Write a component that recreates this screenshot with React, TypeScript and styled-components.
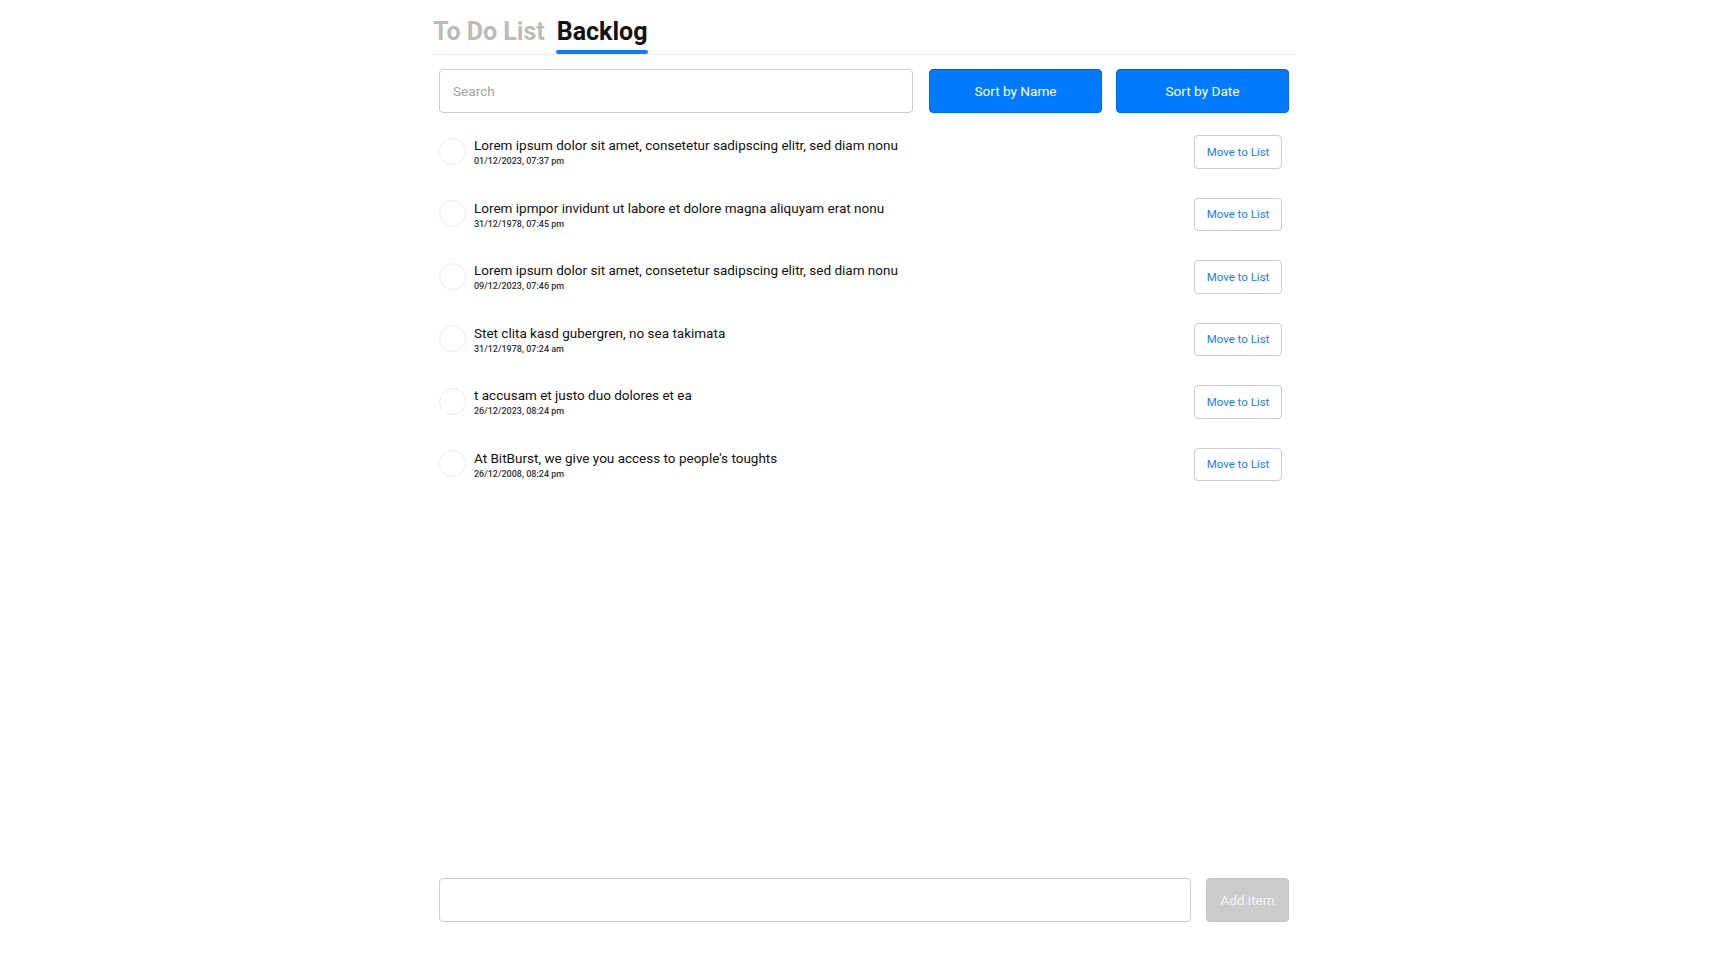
import React, { useState } from "react";
import styled, { createGlobalStyle } from "styled-components";

const GlobalStyle = createGlobalStyle`
  html, body { margin: 0; padding: 0; background: #fff; }
  body { font-family: Roboto, "Liberation Sans", Arial, sans-serif; color: #111; }
  * { box-sizing: border-box; }
`;

const Page = styled.div`
  width: 864px;
  height: 100vh;
  margin: 0 auto;
  display: flex;
  flex-direction: column;
`;

const Tabs = styled.nav`
  display: flex;
  gap: 12px;
  padding: 17px 0 0 1px;
  border-bottom: 1px solid #ebebeb;
`;

const Tab = styled.button<{ $active?: boolean }>`
  position: relative;
  border: none;
  background: none;
  padding: 0 0 7px;
  margin: 0;
  font-family: Roboto, "Liberation Sans", Arial, sans-serif;
  font-size: 25px;
  line-height: 30px;
  font-weight: 700;
  color: ${(p) => (p.$active ? "#111" : "#bbbbbb")};
  cursor: pointer;
  &::after {
    content: "";
    position: absolute;
    left: -1px;
    right: -1px;
    bottom: 0;
    height: 4px;
    border-radius: 2px;
    background: ${(p) => (p.$active ? "#0a7cff" : "transparent")};
  }
`;

const Toolbar = styled.div`
  display: flex;
  align-items: stretch;
  gap: 14px;
  margin-top: 14px;
  padding: 0 7px;
  height: 44px;
`;

const TextField = styled.input`
  flex: 1;
  height: 44px;
  border: 1px solid #cccccc;
  border-radius: 4px;
  padding: 0 13px;
  font-family: Roboto, "Liberation Sans", Arial, sans-serif;
  font-size: 13.6px;
  color: #222;
  outline: none;
  &::placeholder { color: #a3a3a3; }
`;

const SearchField = styled(TextField)`
  flex: 0 0 474px;
  margin-right: 2px;
`;

const SortButton = styled.button`
  flex: 0 0 173px;
  border: 1px solid #0068d6;
  border-radius: 4px;
  background: #007bff;
  color: #fff;
  font-family: Roboto, "Liberation Sans", Arial, sans-serif;
  font-size: 13.6px;
  cursor: pointer;
`;

const List = styled.ul`
  list-style: none;
  margin: 7.5px 0 0;
  padding: 0;
  flex: 1;
`;

const Row = styled.li`
  display: flex;
  align-items: center;
  height: 62.5px;
  padding: 0 14px 0 7px;
`;

const Check = styled.span`
  flex: 0 0 27px;
  height: 27px;
  border-radius: 50%;
  border: 1px solid #ececec;
  margin-right: 8px;
  margin-top: -1px;
`;

const Body = styled.div`
  flex: 1;
  display: flex;
  flex-direction: column;
  margin-top: 1px;
`;

const Title = styled.span`
  font-size: 13.5px;
  line-height: 16px;
  color: #111;
`;

const DateText = styled.span`
  font-size: 9px;
  line-height: 11px;
  font-weight: 500;
  color: #333;
  margin-top: 3px;
`;

const MoveButton = styled.button`
  height: 33.5px;
  width: 88px;
  border: 1px solid #cccccc;
  border-radius: 4px;
  background: #fff;
  color: #1a7cff;
  font-family: Roboto, "Liberation Sans", Arial, sans-serif;
  font-size: 11.5px;
  padding: 0;
  cursor: pointer;
`;

const AddForm = styled.form`
  display: flex;
  gap: 15px;
  padding: 0 7px 50px;
  height: 94px;
`;

const AddButton = styled.button`
  flex: 0 0 83px;
  border: 1px solid #c4c4c4;
  border-radius: 4px;
  background: #cccccc;
  color: #f4f4f4;
  font-family: Roboto, "Liberation Sans", Arial, sans-serif;
  font-size: 13.6px;
  padding: 0;
`;

const items = [
  { title: "Lorem ipsum dolor sit amet, consetetur sadipscing elitr, sed diam nonu", date: "01/12/2023, 07:37 pm" },
  { title: "Lorem ipmpor invidunt ut labore et dolore magna aliquyam erat nonu", date: "31/12/1978, 07:45 pm" },
  { title: "Lorem ipsum dolor sit amet, consetetur sadipscing elitr, sed diam nonu", date: "09/12/2023, 07:46 pm" },
  { title: "Stet clita kasd gubergren, no sea takimata", date: "31/12/1978, 07:24 am" },
  { title: "t accusam et justo duo dolores et ea", date: "26/12/2023, 08:24 pm" },
  { title: "At BitBurst, we give you access to people's toughts", date: "26/12/2008, 08:24 pm" },
];

export default function App() {
  const [text, setText] = useState("");
  return (
    <>
      <GlobalStyle />
      <Page>
        <Tabs>
          <Tab>To Do List</Tab>
          <Tab $active>Backlog</Tab>
        </Tabs>
        <Toolbar>
          <SearchField placeholder="Search" />
          <SortButton>Sort by Name</SortButton>
          <SortButton>Sort by Date</SortButton>
        </Toolbar>
        <List>
          {items.map((it, i) => (
            <Row key={i}>
              <Check />
              <Body>
                <Title>{it.title}</Title>
                <DateText>{it.date}</DateText>
              </Body>
              <MoveButton>Move to List</MoveButton>
            </Row>
          ))}
        </List>
        <AddForm onSubmit={(e) => e.preventDefault()}>
          <TextField value={text} onChange={(e) => setText(e.target.value)} />
          <AddButton type="submit" disabled>Add item</AddButton>
        </AddForm>
      </Page>
    </>
  );
}
